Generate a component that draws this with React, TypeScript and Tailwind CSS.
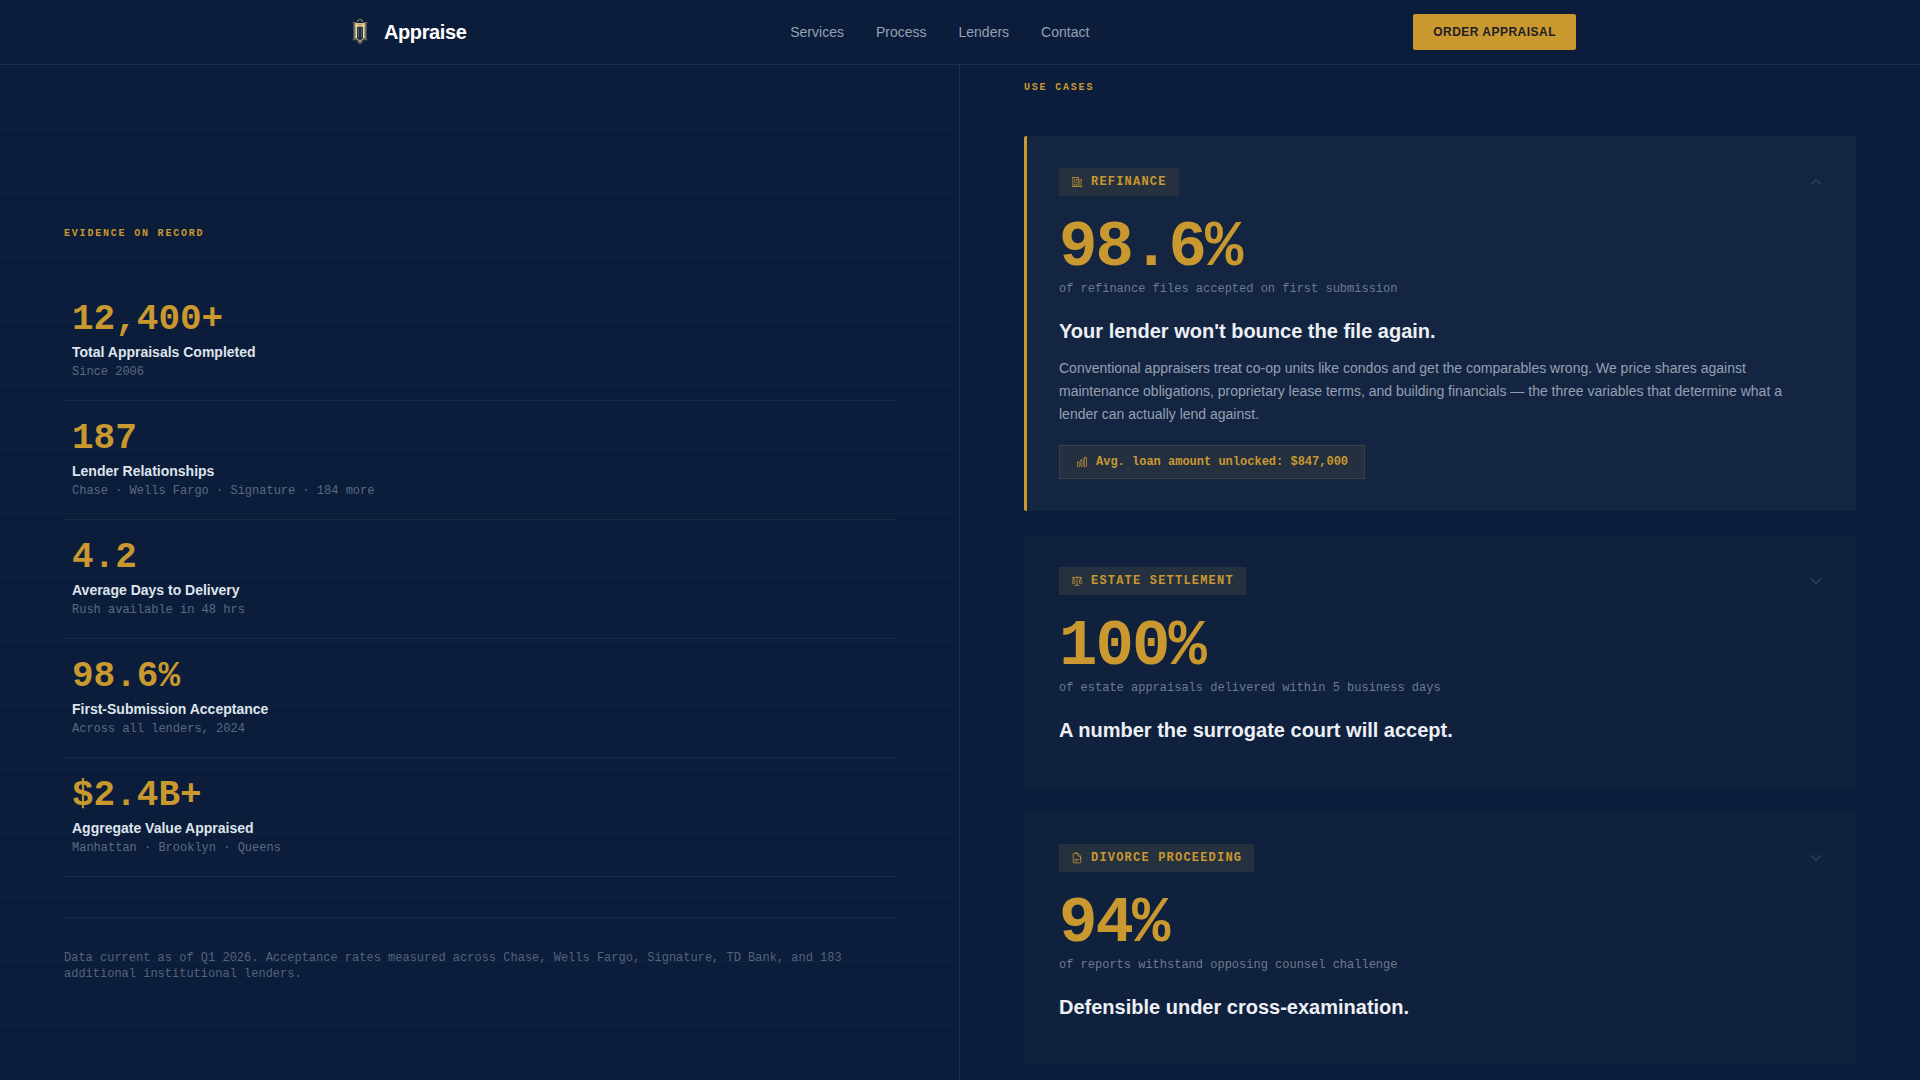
import { useState } from 'react';
import type { IconType } from 'react-icons';
import {
  HiOutlineBuildingOffice2,
  HiOutlineChartBar,
  HiOutlineChevronDown,
  HiOutlineChevronUp,
  HiOutlineDocumentText,
  HiOutlineScale,
} from 'react-icons/hi2';

const monoCn = "font-['Liberation_Mono',monospace]";
const eyebrowCn = `${monoCn} text-[10px] leading-4 font-bold uppercase tracking-[0.18em] text-[#c9982f]`;

const navLinks = ['Services', 'Process', 'Lenders', 'Contact'];

const stats = [
  { value: '12,400+', label: 'Total Appraisals Completed', note: 'Since 2006' },
  { value: '187', label: 'Lender Relationships', note: 'Chase · Wells Fargo · Signature · 184 more' },
  { value: '4.2', label: 'Average Days to Delivery', note: 'Rush available in 48 hrs' },
  { value: '98.6%', label: 'First-Submission Acceptance', note: 'Across all lenders, 2024' },
  { value: '$2.4B+', label: 'Aggregate Value Appraised', note: 'Manhattan · Brooklyn · Queens' },
];

type UseCase = {
  tag: string;
  icon: IconType;
  value: string;
  note: string;
  title: string;
  body?: string;
  proof?: string;
};

const useCases: UseCase[] = [
  {
    tag: 'Refinance',
    icon: HiOutlineBuildingOffice2,
    value: '98.6%',
    note: 'of refinance files accepted on first submission',
    title: "Your lender won't bounce the file again.",
    body: 'Conventional appraisers treat co-op units like condos and get the comparables wrong. We price shares against maintenance obligations, proprietary lease terms, and building financials — the three variables that determine what a lender can actually lend against.',
    proof: 'Avg. loan amount unlocked: $847,000',
  },
  {
    tag: 'Estate Settlement',
    icon: HiOutlineScale,
    value: '100%',
    note: 'of estate appraisals delivered within 5 business days',
    title: 'A number the surrogate court will accept.',
  },
  {
    tag: 'Divorce Proceeding',
    icon: HiOutlineDocumentText,
    value: '94%',
    note: 'of reports withstand opposing counsel challenge',
    title: 'Defensible under cross-examination.',
  },
];

const Logo = () => (
  <svg viewBox="0 0 32 32" className="size-8" fill="none" aria-hidden="true">
    <path d="M13.5 6a2.500 2.500 0 0 1 5 0" stroke="#7c8072" strokeWidth="1.200" />
    <path d="M9.500 6.500h13V24L16 26l-6.500-2z" fill="#1e2c45" />
    <path d="M9.500 6.500 12.500 6v17.500L9.500 24z" fill="#77755f" />
    <path d="M22.500 6.500 19.500 6v17.500l3 .5z" fill="#77755f" />
    <path d="M8.500 6.500h2M21.500 6.500h2M8.500 24h2M21.500 24h2" stroke="#5e6459" />
    <path d="M11 7h10v2.500l-2.500 1.500h-5L11 9.500z" fill="#cfc08a" />
    <path d="M12.300 9v13M19.700 9v13" stroke="#eadfb4" strokeWidth="1.500" />
    <path d="M14.500 12v9M17.500 12v9" stroke="#67695d" strokeWidth=".8" />
    <path d="M12.500 22.500l2.500 2h2l2.500-2" stroke="#b3a672" strokeWidth="1.200" />
    <path d="M12.500 25h7L16 28.500z" fill="#6f6b50" />
    <circle cx="16" cy="9.500" r="1.300" fill="#c69a3c" />
  </svg>
);

const Header = () => (
  <header className="border-b border-[#1e2f4b]">
    <div className="mx-auto flex h-16 w-full max-w-7xl items-center justify-between px-6">
      <a href="#" className="flex items-center gap-2">
        <Logo />
        <span className="text-xl font-bold tracking-[-0.02em] text-white">Appraise</span>
      </a>
      <nav className="flex items-center gap-8">
        {navLinks.map((item) => (
          <a key={item} href="#" className="text-sm text-[#94a0b3]">
            {item}
          </a>
        ))}
      </nav>
      <button
        type="button"
        className="h-9 rounded-xs bg-[#c9982f] px-5 text-xs font-bold uppercase tracking-[0.04em] text-[#1b1e24]"
      >
        Order Appraisal
      </button>
    </div>
  </header>
);

const EvidencePanel = () => (
  <section className="border-r border-[#1e2f4b] bg-[repeating-linear-gradient(to_bottom,transparent_0px,transparent_63px,#12233f_63px,#12233f_64px)] bg-[position:0_1px] px-16 pt-[161px] pb-24">
    <h2 className={eyebrowCn}>Evidence on Record</h2>
    <ul className="mt-10">
      {stats.map((stat) => (
        <li key={stat.label} className="border-b border-[#1a2b48] px-2 py-5">
          <p className={`${monoCn} text-4xl leading-9 font-bold text-[#c9982f]`}>{stat.value}</p>
          <p className="mt-1 text-sm font-bold text-[#dfe4ec]">{stat.label}</p>
          <p className={`${monoCn} mt-0.5 text-xs text-[#5c6a81]`}>{stat.note}</p>
        </li>
      ))}
    </ul>
    <p className={`${monoCn} mt-10 border-t border-[#1a2b48] pt-8 text-xs text-[#55637b]`}>
      Data current as of Q1 2026. Acceptance rates measured across Chase, Wells Fargo, Signature, TD Bank, and 183
      additional institutional lenders.
    </p>
  </section>
);

type UseCaseCardProps = {
  item: UseCase;
  open: boolean;
  onToggle: () => void;
};

const UseCaseCard = ({ item, open, onToggle }: UseCaseCardProps) => {
  const Icon = item.icon;
  const Chevron = open ? HiOutlineChevronUp : HiOutlineChevronDown;

  return (
    <article
      className={`rounded-xs border-l-3 p-8 ${
        open ? 'border-[#c9982f] bg-[#142541]' : 'border-transparent bg-[#10213d]'
      }`}
    >
      <div className="flex items-center justify-between">
        <div
          className={`${monoCn} flex h-7 items-center gap-2 bg-[#263140] px-3 text-xs font-bold uppercase tracking-[0.1em] text-[#c9982f]`}
        >
          <Icon className="size-3" />
          {item.tag}
        </div>
        <button type="button" aria-label={`Toggle ${item.tag}`} aria-expanded={open} onClick={onToggle}>
          <Chevron className="size-4 text-[#4c5b73]" />
        </button>
      </div>
      <p className={`${monoCn} mt-5 text-[64px] leading-16 font-bold tracking-[-0.03em] text-[#c9982f]`}>
        {item.value}
      </p>
      <p className={`${monoCn} mt-px text-xs text-[#6d7a8f]`}>{item.note}</p>
      <h3 className="mt-5 mb-3 text-xl font-bold text-[#edf0f5]">{item.title}</h3>
      {open && item.body && <p className="text-sm leading-relaxed text-[#94a0b3]">{item.body}</p>}
      {open && item.proof && (
        <p
          className={`${monoCn} mt-5 inline-flex items-center gap-2 border border-[#3c4144] bg-[#24303f] px-4 py-2 text-xs font-bold text-[#c9982f]`}
        >
          <HiOutlineChartBar className="size-3" />
          {item.proof}
        </p>
      )}
    </article>
  );
};

const App = () => {
  const [openIdx, setOpenIdx] = useState(0);

  return (
    <div className="flex min-h-screen flex-col bg-[#0b1d3a] font-['Liberation_Sans',sans-serif]">
      <Header />
      <main className="grid flex-1 grid-cols-2">
        <EvidencePanel />
        <section className="px-16 pt-[15px] pb-3">
          <h2 className={eyebrowCn}>Use Cases</h2>
          <div className="mt-10 flex flex-col gap-6">
            {useCases.map((item, idx) => (
              <UseCaseCard
                key={item.tag}
                item={item}
                open={idx === openIdx}
                onToggle={() => setOpenIdx(idx === openIdx ? -1 : idx)}
              />
            ))}
          </div>
        </section>
      </main>
    </div>
  );
};

export default App;
